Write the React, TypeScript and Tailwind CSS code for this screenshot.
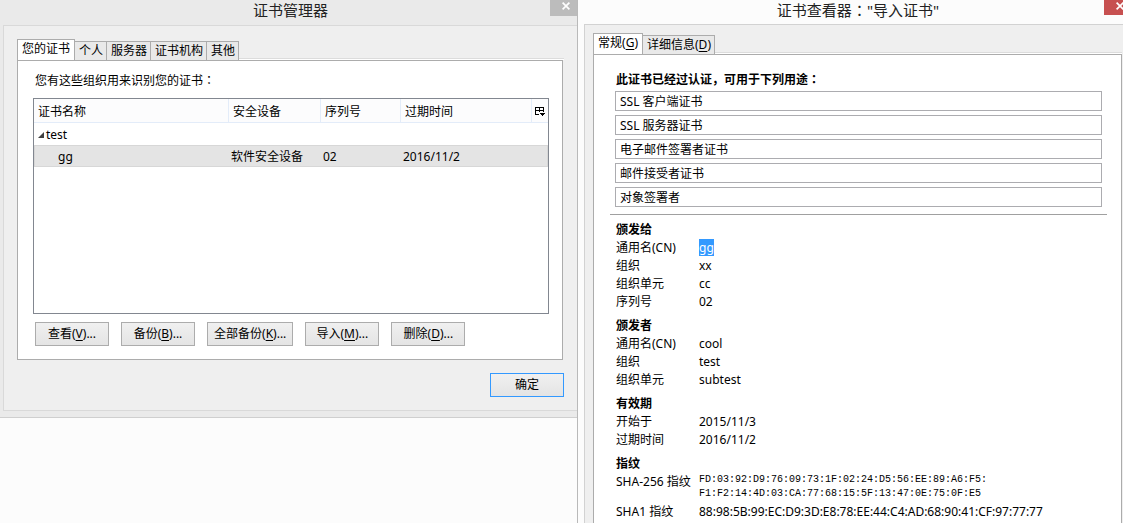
import React from 'react';

type Tab = {
  label: string;
  accessKey?: string;
};

type Field = {
  label: string;
  value: string;
  selected?: boolean;
  mono?: boolean;
};

const managerTabs: Tab[] = [
  { label: '您的证书' },
  { label: '个人' },
  { label: '服务器' },
  { label: '证书机构' },
  { label: '其他' }
];

const viewerTabs: Tab[] = [
  { label: '常规', accessKey: 'G' },
  { label: '详细信息', accessKey: 'D' }
];

const actions = [
  { label: '查看', accessKey: 'V' },
  { label: '备份', accessKey: 'B' },
  { label: '全部备份', accessKey: 'K' },
  { label: '导入', accessKey: 'M' },
  { label: '删除', accessKey: 'D' }
];

const usages = ['SSL 客户端证书', 'SSL 服务器证书', '电子邮件签署者证书', '邮件接受者证书', '对象签署者'];

const sections: { title: string; fields: Field[] }[] = [
  {
    title: '颁发给',
    fields: [
      { label: '通用名(CN)', value: 'gg', selected: true },
      { label: '组织', value: 'xx' },
      { label: '组织单元', value: 'cc' },
      { label: '序列号', value: '02' }
    ]
  },
  {
    title: '颁发者',
    fields: [
      { label: '通用名(CN)', value: 'cool' },
      { label: '组织', value: 'test' },
      { label: '组织单元', value: 'subtest' }
    ]
  },
  {
    title: '有效期',
    fields: [
      { label: '开始于', value: '2015/11/3' },
      { label: '过期时间', value: '2016/11/2' }
    ]
  },
  {
    title: '指纹',
    fields: [
      {
        label: 'SHA-256 指纹',
        value: 'FD:03:92:D9:76:09:73:1F:02:24:D5:56:EE:89:A6:F5:\nF1:F2:14:4D:03:CA:77:68:15:5F:13:47:0E:75:0F:E5',
        mono: true
      },
      { label: 'SHA1 指纹', value: '88:98:5B:99:EC:D9:3D:E8:78:EE:44:C4:AD:68:90:41:CF:97:77:77' }
    ]
  }
];

// The full-width colon is centred in the traditional face
const Colon: React.FC = () => (
  <span lang="zh-TW" className="font-['Noto_Sans_CJK_TC',sans-serif]">
    ：
  </span>
);

const AccessLabel: React.FC<Tab> = ({ label, accessKey }) => (
  <>
    {label}
    {accessKey && (
      <>
        (<span className="underline underline-offset-2">{accessKey}</span>)
      </>
    )}
  </>
);

const TabStrip: React.FC<{ tabs: Tab[] }> = ({ tabs }) => (
  <div role="tablist" className="flex h-[21px] items-end">
    {tabs.map((tab, index) => (
      <button
        key={tab.label}
        type="button"
        role="tab"
        aria-selected={index === 0}
        className={
          index === 0
            ? 'h-[21px] border border-b-0 border-[#acacac] bg-white px-1 pb-0.5 leading-4'
            : 'h-[19px] border border-b-0 border-l-0 border-[#acacac] bg-[#e9e9e9] pr-[3px] pl-1 leading-4'
        }
      >
        <AccessLabel {...tab} />
      </button>
    ))}
    <div className="h-0.5 flex-1 border-t border-[#dcdcdc] bg-white"></div>
  </div>
);

const CloseIcon: React.FC = () => (
  <svg className="h-2 w-2" viewBox="0 0 8 8" fill="none" stroke="white" strokeWidth={1.7}>
    <path d="M0.6 0.6L7.4 7.4M7.4 0.6L0.6 7.4" />
  </svg>
);

const ColumnPickerIcon: React.FC = () => (
  <svg className="h-[10px] w-[11px]" viewBox="0 0 11 10" shapeRendering="crispEdges">
    <path d="M0 0H9V5H8V4H5V5H4V4H1V7H4V8H0ZM1 1V3H4V1ZM5 1V3H8V1Z" fillRule="evenodd" fill="black" />
    <path d="M5 6H10V7H9V8H8V9H7V8H6V7H5Z" fill="black" />
  </svg>
);

const CertificateManager: React.FC = () => (
  <section className="border-b border-[#cfcfcf] bg-[#eaeaea] pb-1.5 pl-[3px]">
    <header className="flex h-[25px] items-start">
      <h1 className="flex-1 pl-7 text-center text-[15px] leading-5 text-[#222]">证书管理器</h1>
      <button type="button" aria-label="关闭" className="flex h-4 w-[27px] items-center justify-center bg-[#bcbcbc] pb-1 pl-1">
        <CloseIcon />
      </button>
    </header>

    <div className="border border-r-0 border-[#d9d9d9] bg-[#efefef] p-[13px]">
      <TabStrip tabs={managerTabs} />
      <div className="mr-px border border-[#acacac] bg-white px-[13px] pt-[11px] pb-[13px] pl-[15px]">
        <p className="pl-0.5 leading-4">
          您有这些组织用来识别您的证书<Colon />
        </p>

        <div className="mt-[9px] h-[216px] border border-[#828790]">
          <table className="w-full table-fixed border-separate border-spacing-0 text-left">
            <colgroup>
              <col className="w-[195px]" />
              <col className="w-[92px]" />
              <col className="w-[80px]" />
              <col />
              <col className="w-4" />
            </colgroup>
            <thead className="bg-[#fcfcfd]">
              <tr className="h-6">
                {['证书名称', '安全设备', '序列号', '过期时间'].map((heading) => (
                  <th key={heading} className="border-r border-b border-[#e3ecf9] pt-0.5 pl-1 font-normal">
                    {heading}
                  </th>
                ))}
                <th className="border-b border-[#e3ecf9] pt-0.5">
                  <button type="button" aria-label="选择列" className="flex w-full justify-center">
                    <ColumnPickerIcon />
                  </button>
                </th>
              </tr>
            </thead>
            <tbody>
              <tr className="h-[22px]">
                <td colSpan={5} className="pt-0.5 pl-1">
                  <span className="flex items-center gap-0.5">
                    <svg className="h-1.5 w-1.5" viewBox="0 0 6 6">
                      <path d="M6 0V6H0Z" fill="#404040" />
                    </svg>
                    test
                  </span>
                </td>
              </tr>
              <tr className="h-[22px] bg-[#e4e4e4]">
                <td className="border-y border-l border-[#d7d7d7] pt-0.5 pl-[23px]">gg</td>
                <td className="border-y border-[#d7d7d7] pt-0.5 pl-0.5">软件安全设备</td>
                <td className="border-y border-[#d7d7d7] pt-0.5 pl-0.5">02</td>
                <td className="border-y border-[#d7d7d7] pt-0.5 pl-0.5">2016/11/2</td>
                <td className="border-y border-r border-[#d7d7d7]"></td>
              </tr>
            </tbody>
          </table>
        </div>

        <div className="mt-2 flex gap-3 pl-0.5">
          {actions.map((action) => (
            <button
              key={action.label}
              type="button"
              className="h-6 min-w-[74px] border border-[#acacac] bg-linear-to-b from-[#f0f0f0] to-[#e4e4e4] px-1.5 leading-4"
            >
              <AccessLabel {...action} />...
            </button>
          ))}
        </div>
      </div>

      <div className="mt-[13px] flex justify-end">
        <button
          type="button"
          className="h-6 w-[74px] border border-[#3399ff] bg-linear-to-b from-[#f0f0f0] to-[#e4e4e4] leading-4"
        >
          确定
        </button>
      </div>
    </div>
  </section>
);

const CertificateViewer: React.FC = () => (
  <section className="flex min-h-screen flex-col overflow-hidden border-l border-[#b9b9b9] bg-[#fcfcfc] pl-1.5">
    <header className="flex h-6 items-start">
      <h1 className="flex-1 pl-7 text-center text-[15px] leading-5 text-[#222]">
        证书查看器
        <Colon />
        "导入证书"
      </h1>
      <button type="button" aria-label="关闭" className="-mr-3 flex h-[15px] w-[31px] items-center justify-center bg-[#c75050] pb-1">
        <CloseIcon />
      </button>
    </header>

    <div className="flex flex-1 flex-col border-t border-l border-[#d2d2d2] bg-[#efefef] pt-2 pr-px pl-2">
      <TabStrip tabs={viewerTabs} />
      <div className="flex-1 border border-b-0 border-[#acacac] bg-white pt-4 pr-3.5 pl-4">
        <div className="px-[5px]">
          <h2 className="pl-px leading-4 font-bold">
            此证书已经过认证，可用于下列用途
            <Colon />
          </h2>
          <div className="mt-[3px] flex flex-col gap-1">
            {usages.map((usage) => (
              <input
                key={usage}
                type="text"
                readOnly
                aria-label={usage}
                value={usage}
                className="h-5 w-full border border-[#acacb0] px-1 leading-4"
              />
            ))}
          </div>
        </div>

        <hr className="mt-[7px] border-[#a0a0a0]" />

        <div className="flex flex-col gap-1.5 pt-1.5 pl-1.5">
          {sections.map((section) => (
            <div key={section.title}>
              <h2 className="leading-[18px] font-bold">{section.title}</h2>
              <dl className="grid grid-cols-[83px_1fr] leading-[18px]">
                {section.fields.map((field) => (
                  <React.Fragment key={field.label}>
                    <dt className="whitespace-nowrap">{field.label}</dt>
                    {field.mono ? (
                      <dd className="pb-0.5 font-['Liberation_Mono',monospace] text-[10px] leading-[14px] whitespace-pre">
                        {field.value}
                      </dd>
                    ) : (
                      <dd className="whitespace-nowrap">
                        {field.selected ? <mark className="bg-[#3399ff] text-white">{field.value}</mark> : field.value}
                      </dd>
                    )}
                  </React.Fragment>
                ))}
              </dl>
            </div>
          ))}
        </div>
      </div>
    </div>
  </section>
);

const App: React.FC = () => {
  return (
    <main
      lang="zh-CN"
      className="grid min-h-screen grid-cols-[577fr_546fr] items-start overflow-hidden bg-[#fcfcfc] font-['Noto_Sans','Noto_Sans_CJK_SC',sans-serif] text-xs text-black"
    >
      <CertificateManager />
      <CertificateViewer />
    </main>
  );
};

export default App;
